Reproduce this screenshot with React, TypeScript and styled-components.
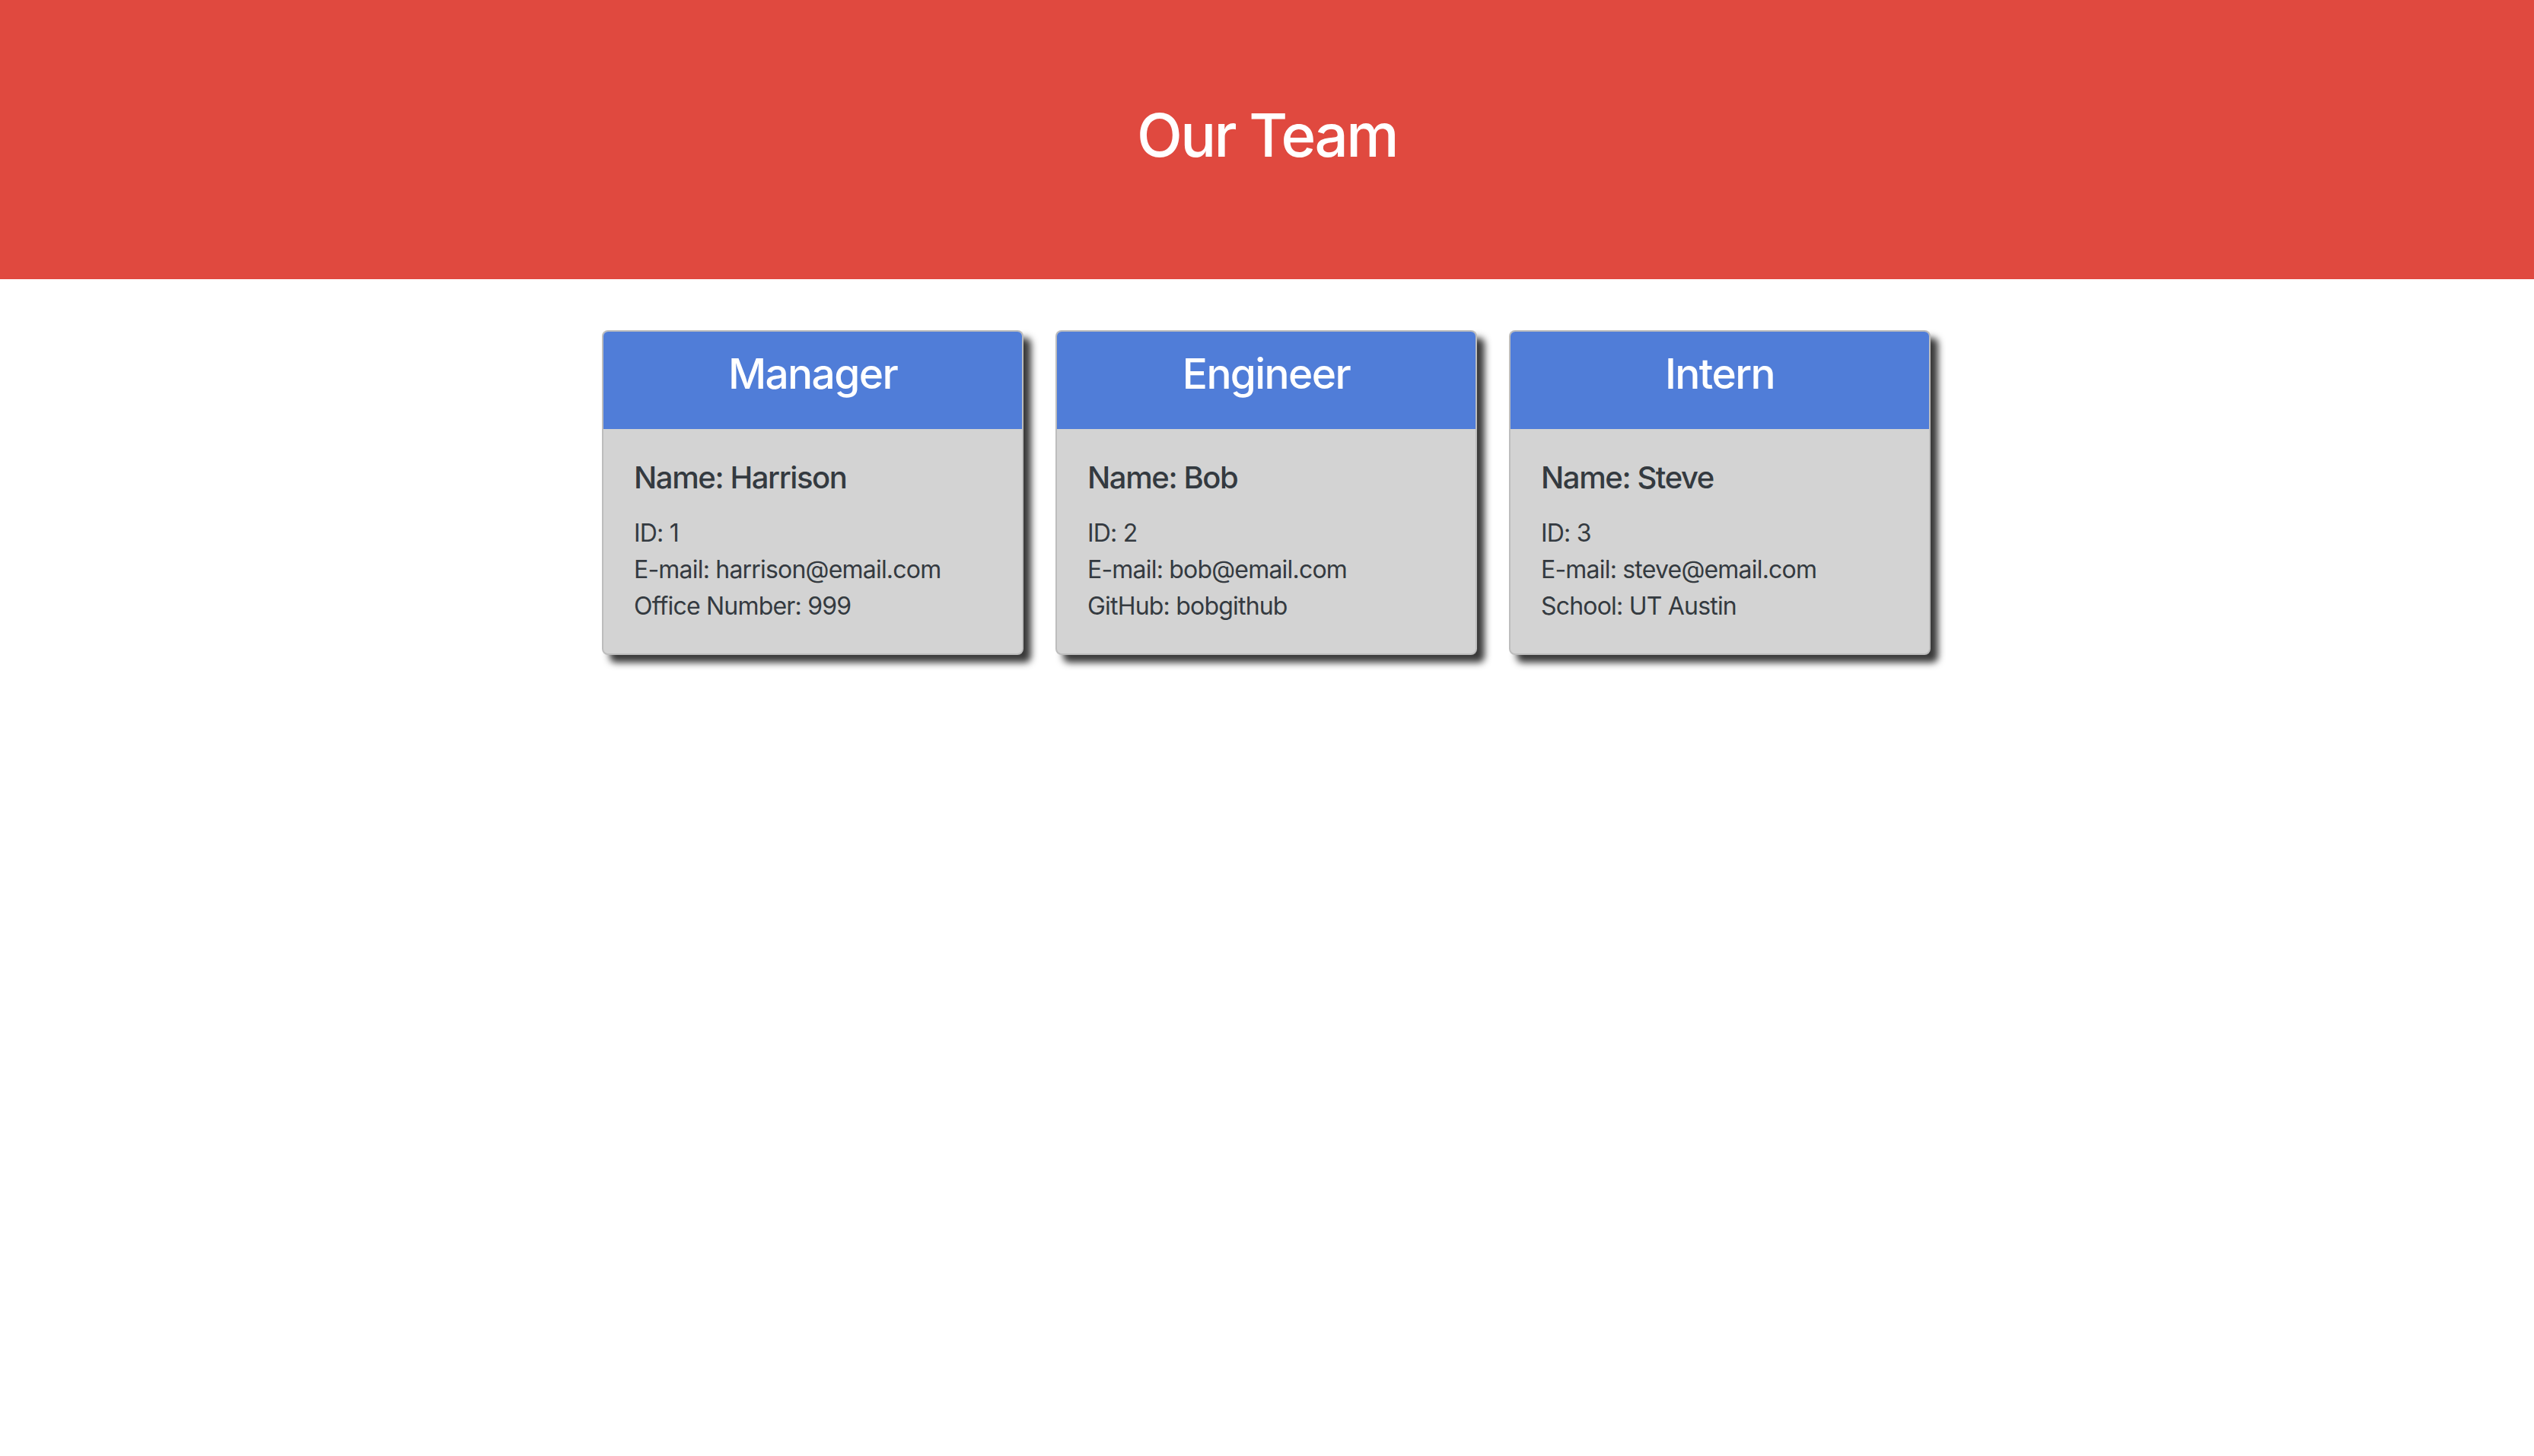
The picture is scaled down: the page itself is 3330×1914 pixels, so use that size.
import React from "react";
import styled, { createGlobalStyle } from "styled-components";

const GlobalStyle = createGlobalStyle`
  html, body {
    margin: 0;
    padding: 0;
    background: #ffffff;
    font-family: Inter, "Noto Sans", "Liberation Sans", sans-serif;
    color: #343a40;
  }
  * { box-sizing: border-box; }
`;

const Page = styled.div`
  min-height: 1914px;
  background: #ffffff;
`;

const Banner = styled.header`
  height: 367px;
  background: #e0493f;
  display: flex;
  align-items: center;
  justify-content: center;
  padding-bottom: 12px;
`;

const Title = styled.h1`
  margin: 0;
  color: #ffffff;
  font-size: 78px;
  font-weight: 500;
  line-height: 1.2;
  letter-spacing: -2.6px;
`;

const Cards = styled.main`
  display: flex;
  justify-content: center;
  gap: 42px;
  padding-top: 67px;
  padding-right: 2px;
`;

const Card = styled.section`
  width: 554px;
  background: #d3d3d3;
  border: 2px solid rgba(0, 0, 0, 0.1);
  border-radius: 8px;
  overflow: hidden;
  box-shadow: 10px 10px 10px rgba(0, 0, 0, 0.78);
  display: flex;
  flex-direction: column;
`;

const CardHeader = styled.div`
  background: #507dd8;
  height: 130px;
  display: flex;
  justify-content: center;
  padding-top: 24px;
  margin: -2px -2px 0;
`;

const Role = styled.h3`
  margin: 0;
  color: #ffffff;
  font-size: 55px;
  font-weight: 500;
  line-height: 1.2;
  letter-spacing: -1.6px;
`;

const CardBody = styled.div`
  padding: 40px 40px 38px 40px;
`;

const Name = styled.h5`
  margin: 0 0 25px;
  font-size: 40px;
  font-weight: 500;
  line-height: 1.2;
  color: #343a40;
  letter-spacing: -1.4px;
`;

const Details = styled.ul`
  list-style: none;
  margin: 0;
  padding: 0;
`;

const Detail = styled.li`
  font-size: 32px;
  line-height: 48px;
  color: #343a40;
  letter-spacing: -0.8px;
`;

type Member = {
  role: string;
  name: string;
  id: number;
  email: string;
  extra: string;
};

const members: Member[] = [
  { role: "Manager", name: "Harrison", id: 1, email: "harrison@email.com", extra: "Office Number: 999" },
  { role: "Engineer", name: "Bob", id: 2, email: "bob@email.com", extra: "GitHub: bobgithub" },
  { role: "Intern", name: "Steve", id: 3, email: "steve@email.com", extra: "School: UT Austin" },
];

export default function App() {
  return (
    <Page>
      <GlobalStyle />
      <Banner>
        <Title>Our Team</Title>
      </Banner>
      <Cards>
        {members.map((m) => (
          <Card key={m.id}>
            <CardHeader>
              <Role>{m.role}</Role>
            </CardHeader>
            <CardBody>
              <Name>Name: {m.name}</Name>
              <Details>
                <Detail>ID: {m.id}</Detail>
                <Detail>E-mail: {m.email}</Detail>
                <Detail>{m.extra}</Detail>
              </Details>
            </CardBody>
          </Card>
        ))}
      </Cards>
    </Page>
  );
}
